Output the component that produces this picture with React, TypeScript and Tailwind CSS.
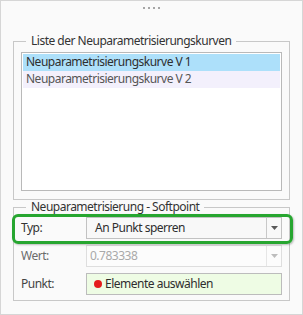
import React from 'react';

const font = { fontFamily: '"Noto Sans", "Open Sans", sans-serif' };

const curves = [
  { name: 'Neuparametrisierungskurve V 1', selected: true },
  { name: 'Neuparametrisierungskurve V 2', selected: false },
];

const Arrow = ({ color }: { color: string }) => (
  <svg width="7" height="4" viewBox="0 0 7 4">
    <path d="M0 0 L7 0 L3.5 4 Z" fill={color} />
  </svg>
);

export default function App() {
  return (
    <div
      style={font}
      className="w-[303px] h-[315px] border border-[#d6d6d6] bg-[#fafafa] px-[12px] text-[12px] leading-[16px] tracking-[-0.5px] text-[#333]"
    >
      <div className="h-[14px] flex items-center justify-center gap-[3px]">
        <span className="w-[2px] h-[2px] bg-[#a6a6a6]" />
        <span className="w-[2px] h-[2px] bg-[#a6a6a6]" />
        <span className="w-[2px] h-[2px] bg-[#a6a6a6]" />
        <span className="w-[2px] h-[2px] bg-[#a6a6a6]" />
      </div>

      <fieldset className="mt-[18px] border border-[#c8c8c8] px-[7px] pb-[8px]">
        <legend className="ml-[5px] px-[5px] text-[#333]">Liste der Neuparametrisierungskurven</legend>
        <div className="mt-[3px] h-[139px] border border-[#b9b9b9] bg-white p-[1px]">
          {curves.map((c) => (
            <div
              key={c.name}
              className={
                c.selected
                  ? 'h-[17px] pl-[3px] bg-[#ade0fa] text-[#2e2e2e]'
                  : 'h-[17px] pl-[3px] bg-[#f3f0fc] text-[#555]'
              }
            >
              {c.name}
            </div>
          ))}
        </div>
      </fieldset>

      <fieldset className="mt-[-1px] border border-[#c8c8c8] px-[7px] pb-[5px]">
        <legend className="ml-[5px] px-[5px] text-[#333]">Neuparametrisierung - Softpoint</legend>
        <div className="mt-[2px] flex flex-col gap-[6px]">
          <div className="relative flex items-center h-[22px]">
            <span className="w-[65px] text-[#333]">Typ:</span>
            <div className="flex-1 h-full border border-[#c2c2c2] bg-[#f8f8f8] flex">
              <span className="flex-1 pl-[8px] flex items-center text-[#2e2e2e]">An Punkt sperren</span>
              <span className="w-[15px] border-l border-[#c8c8c8] flex items-center justify-center">
                <Arrow color="#595959" />
              </span>
            </div>
            <div className="absolute top-[-3px] bottom-[-5px] left-[-9px] right-[-11px] border-[3px] border-[#27a630] rounded-[6px] shadow-[1px_1px_2px_rgba(0,0,0,0.25)]" />
          </div>

          <div className="flex items-center h-[22px]">
            <span className="w-[65px] text-[#6b6b6b]">Wert:</span>
            <div className="flex-1 h-full border border-[#dedede] bg-[#fcfcfc] flex">
              <span className="flex-1 pl-[3px] flex items-center text-[#a9a9a9]">0.783338</span>
              <span className="w-[15px] border-l border-[#e6e6e6] flex items-center justify-center">
                <Arrow color="#bdbdbd" />
              </span>
            </div>
          </div>

          <div className="flex items-center h-[22px]">
            <span className="w-[65px] text-[#444]">Punkt:</span>
            <div className="flex-1 h-full border border-[#bcbcbc] bg-[#eefce4] flex items-center pl-[7px] gap-[3px]">
              <span className="w-[8px] h-[8px] rounded-full bg-[#e51d1d]" />
              <span className="text-[#2e2e2e]">Elemente auswählen</span>
            </div>
          </div>
        </div>
      </fieldset>
    </div>
  );
}
